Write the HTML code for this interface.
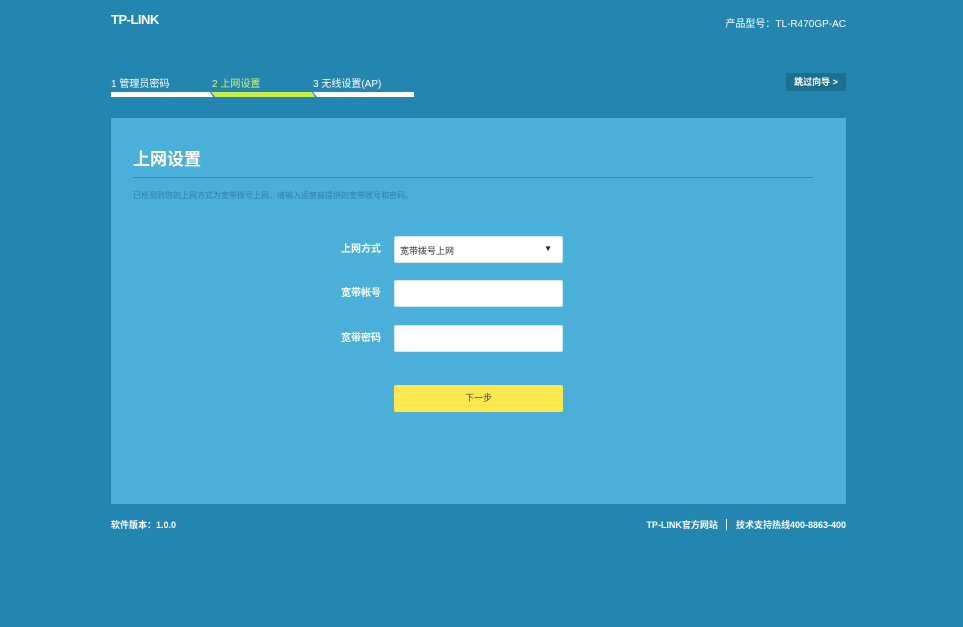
<!DOCTYPE html>
<html><head><meta charset="utf-8"><style>
*{margin:0;padding:0;box-sizing:border-box}
body{width:963px;height:627px;background:#2386b1;font-family:"Liberation Sans","Noto Sans CJK SC",sans-serif;position:relative;overflow:hidden;color:#fff}
.a{position:absolute;white-space:nowrap}
.seg{position:absolute;top:92px;height:5px}
input,.sel{position:absolute;left:394px;width:169px;height:27px;background:#fff;border:1px solid #d8e6ee;border-radius:2px}
.lbl{position:absolute;right:582px;font-size:10px;font-weight:bold}
</style></head><body>
<div class="a" style="left:111px;top:12px;font-size:13px;font-weight:bold;letter-spacing:-0.5px">TP-LINK</div>
<div class="a" style="right:117px;top:15px;font-size:10px">产品型号：TL-R470GP-AC</div>
<div class="a" style="left:111px;top:75px;font-size:10px">1 管理员密码</div>
<div class="a" style="left:212px;top:75px;font-size:10px;color:#d4f56a">2 上网设置</div>
<div class="a" style="left:313px;top:75px;font-size:10px">3 无线设置(AP)</div>
<div class="seg" style="left:111px;width:102px;background:#fff;clip-path:polygon(0 0,97% 0,100% 100%,0 100%)"></div>
<div class="seg" style="left:211px;width:104px;background:#c8ee4e;clip-path:polygon(0 0,97% 0,100% 100%,4% 100%)"></div>
<div class="seg" style="left:313px;width:101px;background:#fff;clip-path:polygon(0 0,100% 0,100% 100%,4% 100%)"></div>
<div class="a" style="left:786px;top:73px;width:60px;height:18px;background:#1d6f91;font-size:9px;font-weight:bold;line-height:18px;text-align:center">跳过向导 &gt;</div>
<div class="a" style="left:111px;top:118px;width:735px;height:386px;background:#4ab0d9"></div>
<div class="a" style="left:133px;top:145px;font-size:17px;font-weight:bold">上网设置</div>
<div class="a" style="left:133px;top:177px;width:680px;height:1px;background:#2f8fbb"></div>
<div class="a" style="left:133px;top:190px;font-size:8px;color:#2b7ca5">已检测到您的上网方式为宽带拨号上网，请输入运营商提供的宽带账号和密码。</div>
<div class="lbl" style="top:240px">上网方式</div>
<div class="sel" style="top:236px"><span class="a" style="left:5px;top:7px;font-size:9px;color:#333">宽带拨号上网</span><span class="a" style="right:10px;top:7px;font-size:8px;color:#222">▼</span></div>
<div class="lbl" style="top:284px">宽带帐号</div>
<input style="top:280px">
<div class="lbl" style="top:329px">宽带密码</div>
<input style="top:325px">
<div class="a" style="left:394px;top:385px;width:169px;height:27px;background:#ffe84e;border-radius:2px;font-size:9px;color:#444;line-height:27px;text-align:center">下一步</div>
<div class="a" style="left:111px;top:518px;font-size:9px;font-weight:bold">软件版本：1.0.0</div>
<div class="a" style="right:117px;top:518px;font-size:9px;font-weight:bold">TP-LINK官方网站 <span style="display:inline-block;width:1px;height:11px;background:#fff;vertical-align:-2px;margin:0 6px"></span> 技术支持热线400-8863-400</div>
</body></html>
